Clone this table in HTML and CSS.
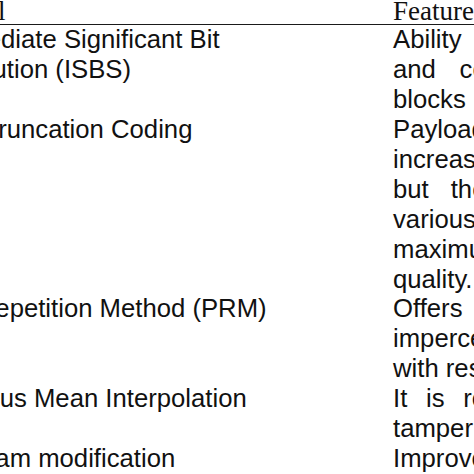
FILE: index.html
```html
<!DOCTYPE html>
<html>
<head>
<meta charset="utf-8">
<link rel="stylesheet" href="styles.css">
</head>
<body>
<div class="page">
  <div class="table">
    <div class="head">Protocol</div>
    <div class="head">Features</div>

    <div class="cell">Intermediate Significant Bit Substitution (ISBS)</div>
    <div class="cell feat">
      <div class="ln">Ability to detect</div>
      <div class="ln">and correct them</div>
      <div class="ln last">blocks</div>
    </div>

    <div class="cell">Block Truncation Coding</div>
    <div class="cell feat">
      <div class="ln">Payload capacity</div>
      <div class="ln">increases greatly,</div>
      <div class="ln">but the image is</div>
      <div class="ln">various images</div>
      <div class="ln">maximum image</div>
      <div class="ln last">quality.</div>
    </div>

    <div class="cell">Pixel Repetition Method (PRM)</div>
    <div class="cell feat">
      <div class="ln">Offers high</div>
      <div class="ln">imperceptibility</div>
      <div class="ln last">with respect to</div>
    </div>

    <div class="cell">Generous Mean Interpolation</div>
    <div class="cell feat">
      <div class="ln">It is robust under</div>
      <div class="ln last">tampering attacks</div>
    </div>

    <div class="cell">Histogram modification</div>
    <div class="cell feat">
      <div class="ln">Improves the</div>
      <div class="ln last">capacity</div>
    </div>
  </div>
</div>
</body>
</html>
```
FILE: styles.css
```css
html, body {
  margin: 0;
  padding: 0;
  background: #ffffff;
}

.page {
  width: 474px;
  height: 474px;
  overflow: hidden;
  background: #ffffff;
}

.table {
  display: grid;
  grid-template-columns: 403px 226px;
  column-gap: 76px;
  margin-left: -86px;
  width: 705px;
  color: #111111;
}

.head {
  font-family: "Liberation Serif", "Times New Roman", serif;
  font-size: 27px;
  line-height: 22px;
  height: 22px;
  padding-bottom: 2px;
  border-bottom: 1.5px solid #1a1a1a;
}

.head:first-child {
  margin-right: -76px;
}

.cell {
  font-family: "Liberation Sans", Arial, sans-serif;
  font-size: 25.7px;
  line-height: 29.93px;
}

.feat .ln {
  text-align: justify;
  text-align-last: justify;
}

.feat .ln.last {
  text-align-last: left;
}
```
